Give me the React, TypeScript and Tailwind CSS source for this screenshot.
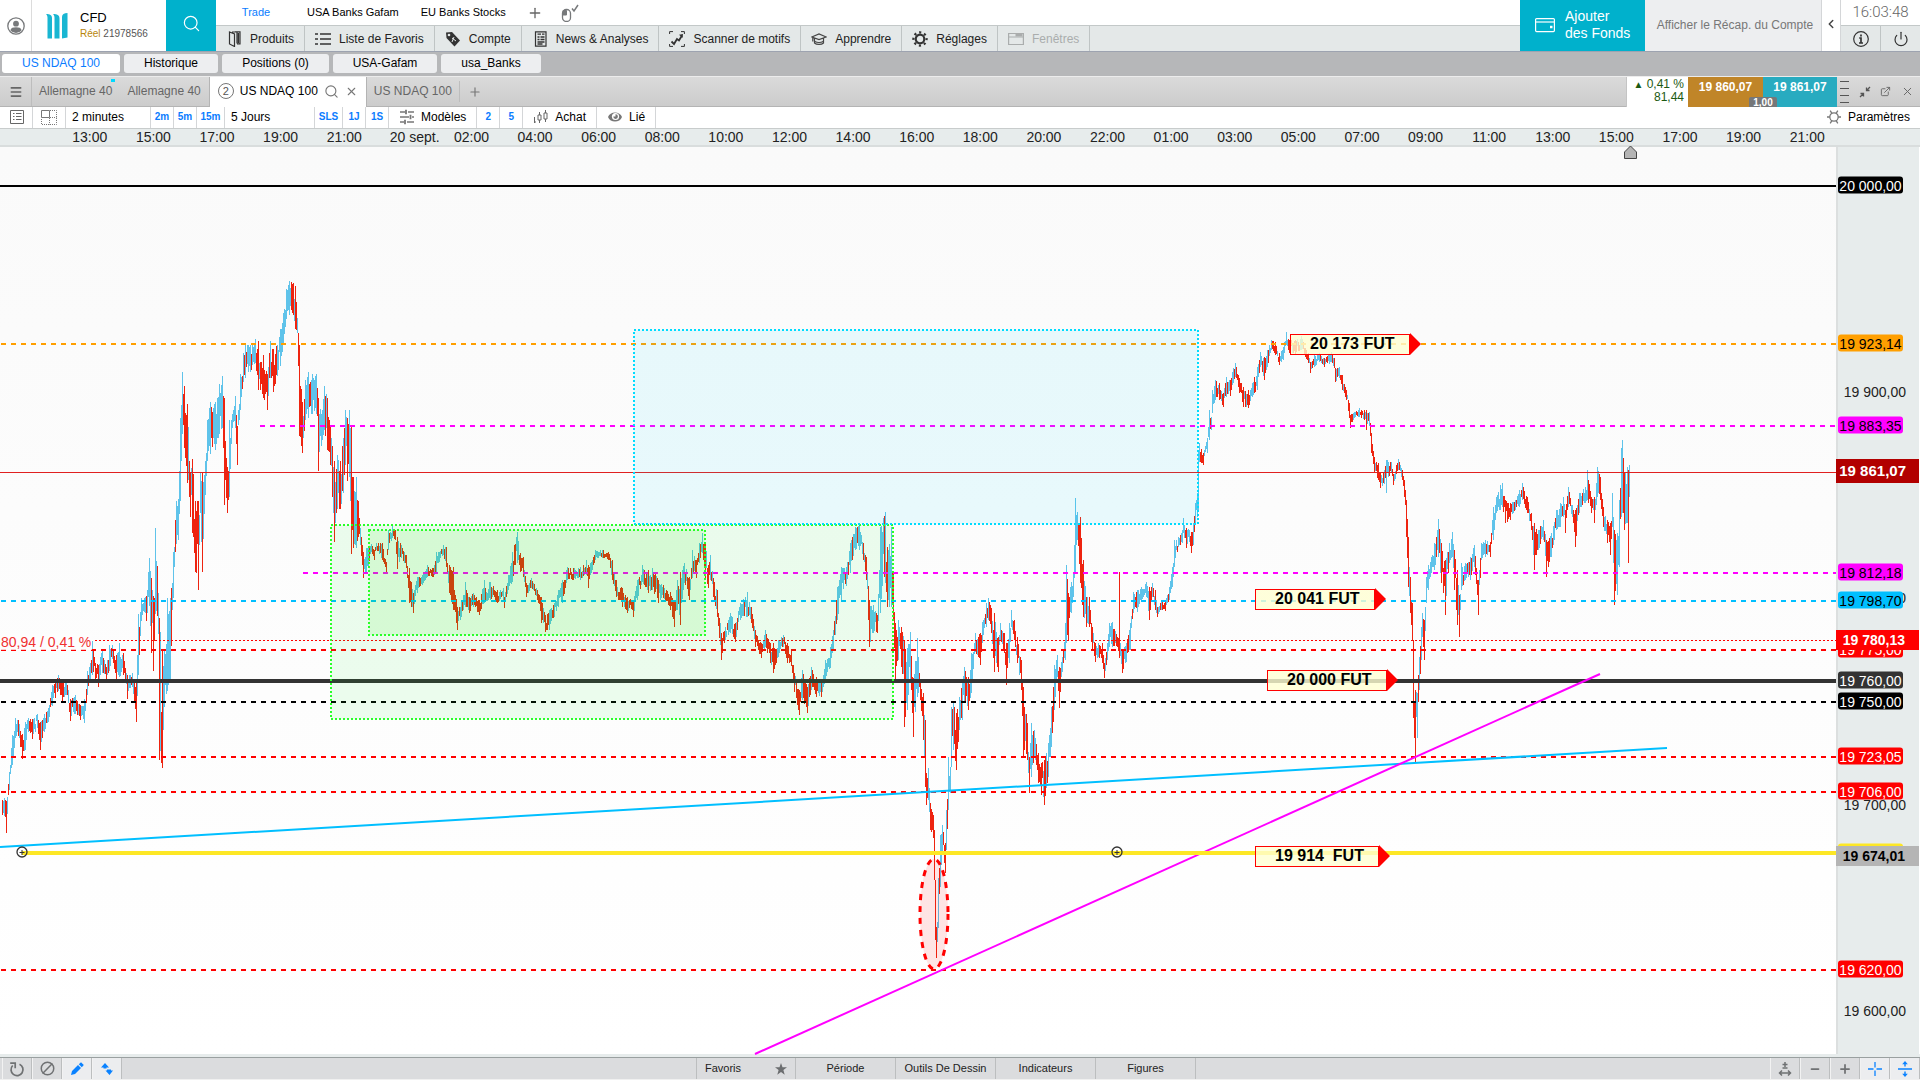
import type { ReactNode } from "react";

import {
    Ban,
    ChevronLeft,
    ExternalLink,
    Menu,
    Minus,
    Plus,
    Power,
    Search,
    X,
} from "lucide-react";

/* ---------------------------------------------------------------- icons */

const UserIcon = () => (
    <svg viewBox="0 0 18 18" className="w-[18px] h-[18px]" fill="none">
        <circle cx="9" cy="9" r="8.2" stroke="#77797b" strokeWidth="1.3" />
        <circle cx="9" cy="6.7" r="2.9" fill="#77797b" />
        <path d="M3.4 13.2c.6-2.4 2.6-3 5.6-3s5 .6 5.6 3A7 7 0 0 1 9 16a7 7 0 0 1-5.6-2.8z" fill="#77797b" />
    </svg>
);

const LogoIcon = () => (
    <svg viewBox="0 0 22 26" className="w-[22px] h-[26px]" fill="#19b6d2">
        <path d="M0 1c4 0 6 1 6 4.500V25.500H1.500V5C1.500 3 1 2 0 1z" />
        <path d="M7 1c4 0 6.500 1 6.500 4.500V25.500H8.500V5C8.500 3 8 2 7 1z" />
        <path d="M21.500 0v24.500L16 25.500V4c0-2.500 2-4 5.500-4z" />
    </svg>
);

const MouseIcon = () => (
    <svg viewBox="0 0 18 18" className="w-[18px] h-[18px]" fill="none" stroke="#77797b">
        <rect x="1.500" y="5.500" width="8" height="12" rx="3.800" strokeWidth="1.300" />
        <path d="M2 6.500h3.500V11H2z" fill="#77797b" />
        <path d="M11 4.500l2 2.500 4-6" strokeWidth="1.500" />
    </svg>
);

const ProductsIcon = () => (
    <svg viewBox="0 0 16 16" className="w-4 h-4" fill="none" stroke="#333" strokeWidth="1.200">
        <path d="M3.500 1l5 2v12.500l-5-2.500zM6 1h5v11.500M9 .8h5v12h-3" />
        <path d="M12.300 2v10" strokeWidth="1.800" />
    </svg>
);

const ListIcon = () => (
    <svg viewBox="0 0 16 16" className="w-4 h-4" stroke="#333" strokeWidth="1.600">
        <path d="M0 3h3M5 3h11M0 8h3M5 8h11M0 13h3M5 13h11" />
    </svg>
);

const TagIcon = () => (
    <svg viewBox="0 0 16 16" className="w-4 h-4">
        <path d="M1 1.500l6-.5 8 8.500-5.500 6L1.500 7z" fill="#333" />
        <circle cx="4" cy="4" r="1.300" fill="#e4e8e8" />
        <path d="M7 7l4 3M9 6l-2 5" stroke="#e4e8e8" strokeWidth="1" />
    </svg>
);

const NewsIcon = () => (
    <svg viewBox="0 0 16 16" className="w-4 h-4" fill="none" stroke="#333">
        <path d="M3.500.8h10.500v14.400H3.500z" strokeWidth="1.200" />
        <path d="M5.500 3.200h3.500M10 3.200h2.500M5.500 6h2M8.500 6h4M5.500 8.500h2M8.500 8.500h4M5.500 11h7M5.500 13h5" strokeWidth="1.300" />
    </svg>
);

const ScannerIcon = () => (
    <svg viewBox="0 0 16 16" className="w-4 h-4" fill="none" stroke="#333">
        <path d="M.6 3V.6H4M12 .6h3.400V3M15.400 13v2.400H12M4 15.400H.6V13" strokeWidth="1" />
        <path d="M2.500 10.500l2.500 2.500 3-5 2 1.500 3-5" strokeWidth="1.800" />
        <path d="M10 3.800l4-.8-.5 4z" fill="#333" stroke="none" />
    </svg>
);

const LearnIcon = () => (
    <svg viewBox="0 0 16 16" className="w-4 h-4" fill="none" stroke="#444" strokeWidth="1.200">
        <path d="M.8 6L8 3l7.200 3L8 8.500zM3.500 7.500v4.500c2 1.800 7 1.800 9 0V7.500M1.800 6.500v4M4 10.500c2 1.300 6 1.300 8 0" />
    </svg>
);

const GearIcon = () => (
    <svg viewBox="0 0 16 16" className="w-4 h-4" fill="none" stroke="#333">
        <circle cx="8" cy="8" r="4.300" strokeWidth="2.200" />
        <circle cx="8" cy="8" r="6.600" strokeWidth="2.200" strokeDasharray="2.200 2.983" strokeDashoffset="1.100" />
    </svg>
);

const WindowIcon = () => (
    <svg viewBox="0 0 16 16" className="w-4 h-4" fill="none" stroke="#aaadad">
        <path d="M.6 2.500h14.800v11H.6zM.6 6h14.800" strokeWidth="1.200" />
        <path d="M7.500 4.200h7" strokeWidth="2.500" />
    </svg>
);

const WalletIcon = () => (
    <svg viewBox="0 0 20 16" className="w-5 h-4" fill="none" stroke="#fff" strokeWidth="1.200">
        <rect x=".6" y="1.600" width="18.800" height="13" rx="1" />
        <path d="M.6 5h18.800" />
        <path d="M15 10h2.500" strokeWidth="2.500" />
    </svg>
);

const InfoIcon = () => (
    <svg viewBox="0 0 16 16" className="w-4 h-4" fill="none" stroke="#333">
        <circle cx="8" cy="8" r="7.300" strokeWidth="1.200" />
        <path d="M8 3.500v2M6.200 7H8v5M6 12h4" strokeWidth="1.700" />
    </svg>
);

const NotesIcon = () => (
    <svg viewBox="0 0 16 16" className="w-4 h-4" fill="none" stroke="#666">
        <path d="M1.500 1.500h13v13h-13z" />
        <path d="M4 4.500h1.500M4 7.500h1.500M4 10.500h1.500M7 4.500h5.500M7 7.500h5.500M7 10.500h5.500" strokeWidth="1.200" />
    </svg>
);

const LayoutIcon = () => (
    <svg viewBox="0 0 16 16" className="w-4 h-4" fill="none" stroke="#777">
        <path d="M.5 1.500h8v7h-8z" />
        <path d="M9 1.500h6.500v14H.5V9M8.500 9v6.500M9 8.500h6.500" strokeDasharray="1 1" />
    </svg>
);

const SlidersIcon = () => (
    <svg viewBox="0 0 16 16" className="w-4 h-4" fill="none" stroke="#777" strokeWidth="1.400">
        <path d="M1 3h5M9 3h6M1 8h9M13 8h2M1 13h4M8 13h7" />
        <path d="M7 .8v4.400M11.500 5.800v4.400M6 10.800v4.400" strokeWidth="1.800" />
    </svg>
);

const CandlesIcon = () => (
    <svg viewBox="0 0 16 16" className="w-4 h-4" fill="none" stroke="#666">
        <path d="M1.500 8v6M1 13h2M6.500 3v3M6.500 11v3M12.500 1v3M12.500 10v3" />
        <path d="M5 6h3v5H5zM11 4h3v6h-3z" />
    </svg>
);

const EyeIcon = () => (
    <svg viewBox="0 0 16 16" className="w-4 h-4">
        <path d="M1 8c2-6 12-6 14 0-2 6-12 6-14 0z" fill="#777" />
        <circle cx="8.500" cy="7.500" r="3.600" fill="#fff" />
        <path d="M8.500 7.500V5.300a2.300 2.300 0 1 1-2.200 2.200z" fill="#777" />
    </svg>
);

const SunIcon = () => (
    <svg viewBox="0 0 16 16" className="w-4 h-4" fill="none" stroke="#777" strokeWidth="1.300">
        <circle cx="8" cy="8" r="4.200" />
        <path d="M12.200 8H15M10.100 11.600l1.700 2.700M5.900 11.600l-1.700 2.700M3.800 8H1M5.900 4.400L4.200 1.700M10.100 4.400l1.700-2.700" />
    </svg>
);

const CollapseIcon = () => (
    <svg viewBox="0 0 12 12" className="w-3 h-3" fill="none" stroke="#555" strokeWidth="1.300">
        <path d="M11 1L7.500 4.500M7.500 1.500v3h3M1 11l3.500-3.500M1.500 7.500h3v3" />
    </svg>
);

const RefreshIcon = () => (
    <svg viewBox="0 0 16 16" className="w-4 h-4" fill="none" stroke="#6f7173" strokeWidth="1.700">
        <path d="M10.500 3.200a6 6 0 1 1-6.800 1.300" />
        <path d="M1.200 2.200h5v5" />
    </svg>
);

const PencilIcon = () => (
    <svg viewBox="0 0 16 16" className="w-4 h-4" fill="#0a82ff">
        <path d="M2 14l1-4 6-6 3 3-6 6zM9.800 3.200L12 1.200l2.800 2.800-2 2.200z" />
    </svg>
);

const SwapIcon = () => (
    <svg viewBox="0 0 16 16" className="w-4 h-4" fill="#0a82ff">
        <path d="M2 6.500L6 2l4 4.500H7.500v1h-3v-1zM6.500 9.500H8v-1h4v1h2L10.500 14z" />
    </svg>
);

const StarIcon = () => (
    <svg viewBox="0 0 12 12" className="w-3 h-3" fill="#6c6e70">
        <path d="M6 0l1.500 4.300H12L8.400 7l1.300 4.700L6 9l-3.700 2.700L3.600 7 0 4.300h4.500z" />
    </svg>
);

const FitIcon = () => (
    <svg viewBox="0 0 16 16" className="w-4 h-4" fill="none" stroke="#6f7173" strokeWidth="1.500">
        <path d="M8 1v5M5.500 3.500h5M5.500 7h5M3 12h10M5 9.500L2.500 12 5 14.500M11 9.500l2.500 2.500-2.500 2.500" />
    </svg>
);

const CrosshairIcon = () => (
    <svg viewBox="0 0 16 16" className="w-4 h-4" fill="none" stroke="#0a82ff" strokeWidth="1.300">
        <path d="M8 1v5.500M8 9.500V15M1 8h5.500M9.500 8H15" />
    </svg>
);

const SplitIcon = () => (
    <svg viewBox="0 0 16 16" className="w-4 h-4" fill="#0a82ff">
        <path d="M1 7.300h14v1.400H1zM8 0l2.800 3.200H8.700V5.500H7.300V3.200H5.200zM8 16l2.800-3.200H8.700v-2.300H7.300v2.300H5.200z" />
    </svg>
);

/* ----------------------------------------------------------- chart data */

const VIEW_TOP = 147;
const VIEW_W = 1836;
const VIEW_H = 907;

// x, high, low
const KNOTS: [number, number, number][] = [
    [2, 800, 815], [4, 798, 816], [6, 801, 833], [9, 772, 790], [12, 735, 765], [13, 736, 758], [15, 718, 738], [18, 720, 736],
    [22, 734, 759], [25, 722, 750], [28, 718, 732], [32, 719, 739], [37, 714, 728], [40, 722, 750], [44, 714, 732], [48, 708, 722],
    [52, 685, 706], [58, 675, 691], [62, 681, 701], [66, 679, 695], [70, 699, 721], [75, 695, 714], [80, 705, 720], [84, 699, 723],
    [87, 671, 695], [90, 663, 679], [92, 641, 675], [95, 663, 679], [98, 665, 687], [102, 649, 673], [106, 667, 681], [109, 645, 671],
    [112, 645, 659], [116, 655, 679], [119, 643, 677], [123, 653, 675], [127, 675, 699], [132, 673, 687], [136, 680, 722], [138, 614, 675],
    [141, 598, 621], [144, 598, 612], [146, 596, 621], [149, 558, 606], [151, 578, 653], [153, 596, 671], [155, 528, 614], [157, 566, 616],
    [159, 618, 760], [162, 649, 768], [164, 649, 707], [167, 598, 691], [170, 598, 679], [173, 552, 598], [176, 501, 544], [178, 499, 540],
    [180, 418, 501], [182, 372, 434], [184, 386, 448], [187, 404, 483], [190, 473, 517], [192, 459, 533], [195, 501, 572], [198, 501, 590],
    [200, 473, 513], [202, 473, 572], [205, 461, 495], [207, 420, 461], [210, 402, 454], [215, 402, 450], [219, 384, 434], [222, 376, 428],
    [224, 398, 505], [227, 467, 513], [229, 420, 497], [232, 414, 428], [235, 396, 428], [237, 426, 465], [240, 374, 410], [243, 353, 382],
    [245, 343, 378], [250, 345, 372], [255, 339, 363], [258, 341, 390], [260, 362, 390], [263, 355, 398], [267, 374, 410], [270, 341, 378],
    [273, 349, 392], [277, 345, 376], [280, 329, 366], [283, 313, 345], [286, 289, 319], [289, 281, 315], [293, 283, 315], [295, 286, 329],
    [298, 333, 366], [299, 345, 436], [302, 402, 453], [305, 380, 420], [308, 372, 418], [312, 374, 414], [316, 374, 414], [318, 398, 471],
    [321, 414, 446], [324, 386, 430], [327, 398, 450], [330, 426, 465], [332, 446, 497], [334, 461, 542], [337, 455, 509], [340, 461, 509],
    [343, 438, 493], [345, 410, 465], [347, 418, 481], [349, 410, 477], [351, 426, 554], [353, 477, 548], [356, 477, 548], [358, 501, 537],
    [361, 537, 556], [363, 552, 578], [366, 548, 572], [368, 547, 567], [371, 544, 552], [374, 550, 560], [376, 543, 550], [382, 543, 560],
    [386, 562, 572], [388, 530, 550], [392, 526, 538], [395, 530, 540], [397, 537, 569], [401, 545, 558], [406, 555, 568], [409, 568, 603],
    [413, 593, 613], [417, 577, 593], [422, 575, 585], [427, 565, 577], [433, 568, 577], [436, 552, 572], [439, 552, 562], [443, 545, 555],
    [446, 547, 567], [449, 565, 593], [453, 567, 610], [457, 607, 630], [461, 600, 617], [465, 582, 607], [469, 597, 613], [473, 593, 607],
    [479, 600, 615], [484, 580, 603], [490, 582, 600], [497, 590, 603], [503, 588, 600], [504, 597, 608], [508, 575, 590], [512, 552, 582],
    [517, 532, 563], [520, 553, 572], [523, 557, 577], [526, 583, 597], [531, 578, 588], [537, 590, 600], [541, 597, 623], [545, 615, 632],
    [549, 610, 630], [554, 603, 617], [558, 590, 607], [562, 580, 603], [567, 567, 580], [573, 568, 580], [580, 567, 580], [586, 560, 575],
    [588, 565, 588], [592, 560, 570], [595, 550, 560], [602, 550, 558], [608, 552, 560], [612, 560, 580], [616, 580, 597], [622, 588, 607],
    [627, 597, 613], [633, 600, 617], [637, 580, 600], [642, 565, 582], [648, 570, 593], [652, 568, 590], [658, 580, 603], [663, 585, 598],
    [670, 592, 610], [674, 600, 627], [677, 580, 610], [680, 572, 625], [684, 563, 583], [689, 577, 600], [692, 550, 578], [696, 560, 578],
    [699, 543, 563], [702, 533, 553], [705, 543, 578], [708, 565, 588], [710, 555, 580], [713, 578, 597], [717, 590, 617], [721, 633, 660],
    [725, 627, 640], [730, 613, 633], [735, 623, 642], [740, 603, 620], [747, 592, 617], [751, 607, 623], [755, 630, 647], [761, 643, 658],
    [765, 630, 647], [770, 643, 663], [773, 643, 673], [778, 640, 657], [783, 635, 647], [787, 643, 663], [791, 650, 666], [794, 673, 692],
    [799, 690, 715], [802, 670, 700], [807, 687, 713], [811, 667, 690], [816, 677, 697], [821, 680, 697], [825, 660, 680], [830, 647, 668],
    [833, 630, 650], [837, 587, 620], [841, 567, 600], [846, 567, 586], [850, 543, 573], [855, 527, 550], [859, 525, 550], [863, 543, 560],
    [866, 557, 580], [869, 600, 647], [873, 605, 633], [877, 615, 633], [880, 527, 613], [885, 512, 583], [887, 547, 607], [891, 527, 607],
    [893, 573, 620], [895, 623, 683], [898, 620, 660], [901, 627, 667], [904, 640, 727], [907, 648, 710], [910, 632, 680], [913, 678, 737],
    [917, 638, 697], [920, 680, 700], [923, 693, 740], [925, 720, 787], [926, 773, 805], [928, 768, 800], [930, 803, 830], [933, 815, 838],
    [934, 830, 880], [935, 880, 940], [936, 927, 958], [938, 878, 928], [940, 835, 887], [942, 825, 853], [945, 843, 873], [946, 810, 850],
    [948, 757, 810], [950, 767, 793], [951, 707, 767], [953, 703, 750], [956, 713, 770], [959, 697, 730], [962, 680, 720], [964, 667, 703],
    [968, 677, 710], [971, 653, 693], [975, 633, 652], [980, 633, 665], [982, 622, 643], [986, 603, 627], [988, 598, 620], [991, 608, 633],
    [994, 613, 672], [998, 637, 672], [1000, 623, 640], [1004, 633, 653], [1006, 643, 685], [1009, 623, 663], [1011, 610, 627], [1014, 620, 640],
    [1017, 637, 663], [1021, 660, 690], [1023, 687, 758], [1027, 723, 760], [1029, 757, 793], [1031, 723, 777], [1034, 730, 757], [1038, 753, 783],
    [1041, 763, 795], [1044, 760, 805], [1048, 743, 777], [1051, 707, 747], [1054, 665, 710], [1057, 655, 677], [1059, 667, 708], [1062, 657, 672],
    [1065, 623, 660], [1066, 565, 643], [1068, 593, 640], [1071, 582, 613], [1073, 573, 597], [1075, 498, 573], [1077, 512, 540], [1080, 517, 583],
    [1083, 560, 617], [1086, 597, 627], [1089, 597, 627], [1092, 627, 650], [1095, 643, 662], [1098, 643, 657], [1102, 643, 663], [1104, 663, 678],
    [1107, 643, 660], [1109, 623, 647], [1112, 622, 647], [1117, 637, 647], [1119, 636, 658], [1122, 650, 673], [1126, 643, 662], [1130, 623, 650],
    [1133, 592, 613], [1137, 590, 612], [1141, 587, 600], [1146, 582, 597], [1149, 587, 620], [1152, 583, 597], [1155, 590, 610], [1157, 607, 617],
    [1161, 600, 610], [1165, 602, 611], [1169, 587, 600], [1172, 567, 587], [1174, 540, 567], [1178, 537, 547], [1182, 530, 543], [1183, 518, 533],
    [1186, 528, 548], [1189, 530, 542], [1191, 532, 553], [1193, 523, 545], [1195, 503, 523], [1197, 493, 517], [1198, 450, 510], [1199, 443, 462],
    [1203, 453, 465], [1207, 438, 453], [1209, 410, 440], [1211, 417, 430], [1212, 390, 413], [1215, 380, 400], [1219, 383, 400], [1223, 393, 407],
    [1226, 377, 397], [1230, 380, 396], [1233, 368, 383], [1235, 363, 377], [1239, 378, 393], [1243, 387, 407], [1248, 390, 408], [1252, 383, 397],
    [1257, 367, 390], [1260, 352, 367], [1264, 357, 380], [1267, 350, 367], [1271, 340, 350], [1275, 342, 355], [1279, 353, 365], [1283, 347, 360],
    [1286, 332, 345], [1289, 340, 353], [1295, 340, 354], [1301, 336, 350], [1305, 348, 357], [1308, 353, 363], [1310, 362, 373], [1314, 355, 367],
    [1319, 353, 362], [1324, 358, 367], [1329, 354, 364], [1331, 352, 362], [1334, 358, 368], [1335, 368, 382], [1339, 367, 378], [1342, 375, 390],
    [1346, 390, 400], [1349, 403, 418], [1350, 415, 428], [1354, 412, 418], [1359, 408, 417], [1364, 410, 420], [1366, 410, 430], [1369, 412, 426],
    [1371, 433, 453], [1374, 457, 473], [1378, 463, 480], [1380, 473, 488], [1384, 470, 484], [1386, 460, 493], [1391, 462, 473], [1393, 474, 485],
    [1398, 459, 470], [1402, 470, 480], [1404, 480, 497], [1406, 500, 537], [1408, 537, 587], [1410, 577, 613], [1412, 603, 640], [1413, 640, 718],
    [1415, 690, 762], [1417, 693, 738], [1419, 657, 690], [1421, 627, 660], [1422, 613, 637], [1424, 620, 660], [1426, 577, 603], [1428, 565, 590],
    [1431, 557, 573], [1434, 543, 570], [1438, 519, 557], [1441, 543, 583], [1445, 560, 615], [1449, 543, 563], [1452, 532, 557], [1454, 550, 590],
    [1457, 570, 625], [1459, 595, 637], [1461, 563, 590], [1465, 563, 580], [1470, 557, 580], [1474, 545, 567], [1478, 580, 615], [1481, 543, 560],
    [1485, 540, 557], [1490, 542, 557], [1493, 507, 540], [1496, 497, 513], [1500, 485, 510], [1502, 483, 507], [1505, 500, 523], [1510, 503, 520],
    [1515, 500, 510], [1519, 490, 507], [1522, 483, 500], [1527, 497, 513], [1531, 513, 530], [1534, 523, 570], [1538, 530, 550], [1543, 520, 540],
    [1546, 540, 577], [1551, 533, 557], [1556, 510, 530], [1560, 503, 527], [1563, 497, 517], [1565, 510, 533], [1568, 487, 507], [1573, 510, 523],
    [1575, 510, 547], [1579, 493, 513], [1585, 487, 503], [1587, 470, 500], [1591, 497, 513], [1594, 497, 523], [1597, 467, 497], [1600, 477, 500],
    [1603, 507, 527], [1607, 520, 543], [1610, 523, 555], [1612, 493, 527], [1614, 530, 605], [1617, 533, 595], [1619, 500, 567], [1621, 448, 517],
    [1622, 440, 513], [1624, 473, 530], [1627, 467, 523], [1628, 470, 563], [1629, 465, 497],
];

const noise = (n: number) => {
    const v = Math.sin(n * 127.1) * 43758.5453;
    return v - Math.floor(v);
};

function buildBars() {
    let up = "";
    let down = "M1119.5 572V640";
    const push = (x: number, high: number, low: number, falling: boolean) => {
        const seg = `M${x + 0.5} ${Math.round(high)}V${Math.round(low)}`;
        if (falling) down += seg;
        else up += seg;
    };

    KNOTS.forEach(([x, high, low], i) => {
        const next = KNOTS[i + 1];
        const prev = KNOTS[i - 1] ?? KNOTS[i];
        const falling = high + low === prev[1] + prev[2] ? noise(x) > 0.5 : high + low > prev[1] + prev[2];
        push(x, high, low, falling);
        if (!next) return;

        // bars between two knots keep inside the interpolated range
        for (let bx = x + 1; bx < next[0]; bx++) {
            const t = (bx - x) / (next[0] - x);
            const top = high + (next[1] - high) * t;
            const bottom = low + (next[2] - low) * t;
            const size = (bottom - top) * (0.4 + noise(bx) * 0.5);
            const start = top + (bottom - top - size) * noise(bx + 0.37);
            const trend = next[1] + next[2] > high + low ? 0.3 : 0.7;
            push(bx, start, start + size, noise(bx + 0.71) > trend);
        }
    });

    return { up, down };
}

const BARS = buildBars();

const DASHED_LINES = [
    { y: 344, from: 1, color: "#ff9f00" },
    { y: 426, from: 260, color: "#ff00ff" },
    { y: 573, from: 303, color: "#ff00ff" },
    { y: 601, from: 1, color: "#00bfff" },
    { y: 650, from: 1, color: "#ff0000" },
    { y: 702, from: 1, color: "#000000" },
    { y: 757, from: 1, color: "#ff0000" },
    { y: 792, from: 1, color: "#ff0000" },
    { y: 970, from: 1, color: "#ff0000" },
];

const TAGS = [
    { x: 1290, y: 344, text: "20 173 FUT" },
    { x: 1255, y: 599, text: "20 041 FUT" },
    { x: 1267, y: 680, text: "20 000 FUT" },
    { x: 1255, y: 856, text: "19 914  FUT" },
];

const SCALE = [
    { y: 392, text: "19 900,00" },
    { y: 598, text: "19 800,00" },
    { y: 805, text: "19 700,00" },
    { y: 1011, text: "19 600,00" },
];

const CHIPS = [
    { y: 185, text: "20 000,00", style: "bg-black text-white" },
    { y: 343, text: "19 923,14", style: "bg-[#ff9f00] text-black" },
    { y: 425, text: "19 883,35", style: "bg-[#ff00ff] text-black" },
    { y: 572, text: "19 812,18", style: "bg-[#ff00ff] text-black" },
    { y: 600, text: "19 798,70", style: "bg-[#00bfff] text-black" },
    { y: 649, text: "19 775,00", style: "bg-[#ff0000] text-white" },
    { y: 680, text: "19 760,00", style: "bg-[#333333] text-white" },
    { y: 701, text: "19 750,00", style: "bg-black text-white" },
    { y: 756, text: "19 723,05", style: "bg-[#ff0000] text-white" },
    { y: 791, text: "19 706,00", style: "bg-[#ff0000] text-white" },
    { y: 852, text: "", style: "bg-[#fde725]" },
    { y: 969, text: "19 620,00", style: "bg-[#ff0000] text-white" },
];

const MARKS = [
    { y: 471, text: "19 861,07", style: "h-6 pr-[13px] bg-[#b20000] text-white text-[15px]" },
    { y: 640, text: "19 780,13", style: "h-5 pr-3.5 bg-[#ff0000] text-white text-sm" },
    { y: 856, text: "19 674,01", style: "h-5 pr-3.5 bg-[#b5b5b5] text-black text-sm" },
];

const TIMES = [
    "13:00", "15:00", "17:00", "19:00", "21:00", "20 sept.", "02:00", "04:00", "06:00", "08:00",
    "10:00", "12:00", "14:00", "16:00", "18:00", "20:00", "22:00", "01:00", "03:00", "05:00",
    "07:00", "09:00", "11:00", "13:00", "15:00", "17:00", "19:00", "21:00",
];

const topOf = (y: number) => `${((y - VIEW_TOP) / VIEW_H) * 100}%`;
const leftOf = (x: number) => `${(x / VIEW_W) * 100}%`;

/* --------------------------------------------------------------- header */

const MENU = [
    { label: "Produits", icon: <ProductsIcon /> },
    { label: "Liste de Favoris", icon: <ListIcon /> },
    { label: "Compte", icon: <TagIcon /> },
    { label: "News & Analyses", icon: <NewsIcon /> },
    { label: "Scanner de motifs", icon: <ScannerIcon /> },
    { label: "Apprendre", icon: <LearnIcon /> },
    { label: "Réglages", icon: <GearIcon /> },
    { label: "Fenêtres", icon: <WindowIcon />, disabled: true },
];

const Header = () => (
    <header className="flex h-[52px] shrink-0 border-b border-[#9da3b0] bg-white">
        <button type="button" aria-label="Profil" className="w-8 flex items-center justify-center border-r border-[#dcdcdc]">
            <UserIcon />
        </button>
        <div className="w-[134px] flex items-center gap-3 pl-3.5">
            <LogoIcon />
            <div className="leading-4 whitespace-nowrap">
                <p className="text-[13px] text-black">CFD</p>
                <p className="text-[10px] text-[#555]"><span className="text-[#b8860b]">Réel</span> 21978566</p>
            </div>
        </div>
        <button type="button" aria-label="Rechercher" className="w-[50px] pb-1 flex items-center justify-center bg-[#00b1cc] text-white">
            <Search className="w-[19px] h-[19px]" strokeWidth={1.5} />
        </button>

        <div className="flex-1 min-w-0 flex flex-col">
            <nav className="flex h-[26px] border-b border-[#c3c8c8] text-[11px] text-black">
                <button type="button" className="w-20 text-[#0a7cff]">Trade</button>
                <button type="button" className="px-[11px]">USA Banks Gafam</button>
                <button type="button" className="px-[11px]">EU Banks Stocks</button>
                <button type="button" aria-label="Ajouter" className="w-9 flex items-center justify-center text-[#666]">
                    <Plus className="w-4 h-4" strokeWidth={2} />
                </button>
                <button type="button" aria-label="Mode souris" className="pl-2">
                    <MouseIcon />
                </button>
            </nav>
            <nav className="flex flex-1 bg-[#e4e8e8] text-xs text-[#222]">
                {MENU.map((item) => (
                    <button
                        key={item.label}
                        type="button"
                        disabled={item.disabled}
                        className="flex items-center gap-2 px-2.5 border-r border-[#bfc4c4] whitespace-nowrap disabled:text-[#aaadad]"
                    >
                        {item.icon}
                        {item.label}
                    </button>
                ))}
            </nav>
        </div>

        <button type="button" className="w-[125px] flex items-center gap-2.5 pl-[15px] pb-0.5 bg-[#00b1cc] text-white text-sm leading-[17px] text-left">
            <WalletIcon />
            <span>Ajouter<br />des Fonds</span>
        </button>
        <button type="button" className="w-[176px] pl-1 pb-0.5 bg-[#edeef0] text-xs text-[#777] whitespace-nowrap">
            Afficher le Récap. du Compte
        </button>
        <button type="button" aria-label="Réduire" className="w-5 pb-1 flex items-center justify-center border-x border-[#d4d6d8] text-[#444]">
            <ChevronLeft className="w-3.5 h-3.5" strokeWidth={2.5} />
        </button>
        <div className="w-[79px] flex flex-col">
            <time className="flex h-[26px] items-center justify-center border-b border-[#c3c8c8] font-[Roboto] font-light text-[15px] text-[#666]">16:03:48</time>
            <div className="flex flex-1 bg-[#e4e8e8] text-[#333]">
                <button type="button" aria-label="Informations" className="flex-1 flex items-center justify-center border-r border-[#bfc4c4]">
                    <InfoIcon />
                </button>
                <button type="button" aria-label="Déconnexion" className="flex-1 flex items-center justify-center">
                    <Power className="w-4 h-4" strokeWidth={1.8} />
                </button>
            </div>
        </div>
    </header>
);

const WorkspaceBar = () => (
    <nav className="flex h-6 shrink-0 items-center gap-1 pl-0.5 pb-px bg-[#b6b7b9] text-xs text-black [&>button]:h-[19px] [&>button]:pb-0.5 [&>button]:rounded-[3px]">
        <button type="button" className="w-[118px] bg-white text-[#0a7cff]">US NDAQ 100</button>
        <button type="button" className="w-[94px] bg-[#edeef0]">Historique</button>
        <button type="button" className="w-[107px] bg-[#edeef0]">Positions (0)</button>
        <button type="button" className="w-[104px] bg-[#edeef0]">USA-Gafam</button>
        <button type="button" className="w-[100px] bg-[#edeef0]">usa_Banks</button>
    </nav>
);

/* ----------------------------------------------------------- chart panel */

const TabBar = () => (
    <div className="flex h-[31px] shrink-0 border-t border-t-[#ececec] border-b border-b-[#b4b4b4] bg-linear-to-b from-[#dadada] to-[#cccccc] text-xs text-[#666]">
        <button type="button" aria-label="Menu" className="w-[31px] flex items-center justify-center">
            <Menu className="w-3.5 h-3.5" strokeWidth={2.8} />
        </button>
        <button type="button" className="relative px-[7px] pb-0.5 border-l border-[#bdbdbd]">
            Allemagne 40
            <span className="absolute right-1 top-0.5 w-1 h-[3px] bg-[#00d9ff]" />
        </button>
        <button type="button" className="px-2 pb-0.5">Allemagne 40</button>
        <div className="flex items-center -mb-px px-2 pb-0.5 border-x border-[#b4b4b4] bg-white text-black">
            <span className="w-4 h-4 mr-1.5 flex items-center justify-center rounded-full border border-[#777] text-[11px] text-[#555]">2</span>
            US NDAQ 100
            <button type="button" aria-label="Rechercher" className="ml-1.5 text-[#777]">
                <Search className="w-[15px] h-[15px]" strokeWidth={1.8} />
            </button>
            <button type="button" aria-label="Fermer" className="ml-1.5 text-[#777]">
                <X className="w-[13px] h-[13px]" strokeWidth={2} />
            </button>
        </div>
        <button type="button" className="px-[7px] pb-0.5">US NDAQ 100</button>
        <button type="button" aria-label="Nouvel onglet" className="w-8 my-1 pl-2 border-l border-[#bdbdbd] text-[#777]">
            <Plus className="w-3.5 h-3.5" strokeWidth={2} />
        </button>

        <div className="ml-auto flex -mb-px">
            <div className="w-[62px] pr-1 pt-px border-l border-[#c4c4c4] bg-white text-right leading-[13px] text-[#1c5a12]">
                <p><span className="text-[10px]">▲</span> 0,41 %</p>
                <p>81,44</p>
            </div>
            <div className="relative flex text-white font-bold">
                <button type="button" className="w-[75px] pb-2.5 bg-[#c08528]">19 860,07</button>
                <button type="button" className="w-[74px] pb-2.5 bg-[#28abc0]">19 861,07</button>
                <span className="absolute bottom-0 left-[61px] w-7 h-2.5 rounded-t-[2px] bg-[#757779] text-center text-[10px] leading-[11px]">1,00</span>
            </div>
            <div className="flex items-center justify-between w-[83px] pl-[3px] pr-1.5 border-b border-[#b4b4b4]">
                <div className="flex flex-col gap-1.5 w-[9px]">
                    <span className="h-px bg-[#555]" />
                    <span className="h-px bg-[#555]" />
                    <span className="h-px bg-[#555]" />
                    <span className="h-px bg-[#555]" />
                </div>
                <button type="button" aria-label="Réduire"><CollapseIcon /></button>
                <button type="button" aria-label="Détacher"><ExternalLink className="w-[11px] h-[11px]" /></button>
                <button type="button" aria-label="Fermer"><X className="w-[13px] h-[13px]" strokeWidth={1.8} /></button>
            </div>
        </div>
    </div>
);

const Shortcut = ({ children }: { children: ReactNode }) => (
    <button type="button" className="w-[23px] border-r border-[#d4d6d8] text-[10px] font-bold text-[#0a7cff]">
        {children}
    </button>
);

const Toolbar = () => (
    <div className="flex h-[22px] shrink-0 border-b border-[#c8cccc] bg-white text-xs text-black [&>*]:pb-0.5">
        <button type="button" aria-label="Liste" className="w-[33px] pl-[9px] border-r border-[#d4d6d8]"><NotesIcon /></button>
        <button type="button" aria-label="Disposition" className="w-[33px] pl-2 border-r border-[#d4d6d8]"><LayoutIcon /></button>
        <select aria-label="Intervalle" className="appearance-none w-[85px] pl-1.5 border-r border-[#d4d6d8]">
            <option>2 minutes</option>
        </select>
        <Shortcut>2m</Shortcut>
        <Shortcut>5m</Shortcut>
        <button type="button" className="w-7 border-r border-[#d4d6d8] text-[10px] font-bold text-[#0a7cff]">15m</button>
        <select aria-label="Période" className="appearance-none w-[90px] pl-1.5 border-r border-[#d4d6d8]">
            <option>5 Jours</option>
        </select>
        <button type="button" className="w-[28px] border-r border-[#d4d6d8] text-[10px] font-bold text-[#0a7cff]">SLS</button>
        <Shortcut>1J</Shortcut>
        <Shortcut>1S</Shortcut>
        <button type="button" className="flex items-center gap-1.5 px-2.5 border-r border-[#d4d6d8]"><SlidersIcon />Modèles</button>
        <Shortcut>2</Shortcut>
        <Shortcut>5</Shortcut>
        <button type="button" className="flex items-center gap-1.5 px-2.5 border-r border-[#d4d6d8]"><CandlesIcon />Achat</button>
        <button type="button" className="flex items-center gap-1.5 px-2.5 border-r border-[#d4d6d8]"><EyeIcon />Lié</button>
        <button type="button" className="ml-auto flex items-center gap-1.5 pr-2.5"><SunIcon />Paramètres</button>
    </div>
);

const TimeAxis = () => (
    <div className="grid grid-cols-[repeat(28,minmax(0,1fr))] h-[18px] shrink-0 pl-[58px] pr-[81px] border-b-2 border-[#d9dddd] bg-[#e7ecec] text-sm leading-4 text-[#222]">
        {TIMES.map((time, i) => (
            <span key={i} className={time.length > 5 ? "text-right whitespace-nowrap" : "text-center"}>
                {time}
            </span>
        ))}
    </div>
);

const Plot = () => (
    <div className="relative flex-1 min-w-0 border-r-2 border-[#dcdfdf] bg-linear-to-b from-[#fafafa] to-white">
        <svg
            viewBox={`0 ${VIEW_TOP} ${VIEW_W} ${VIEW_H}`}
            preserveAspectRatio="none"
            className="absolute inset-0 w-full h-full overflow-visible"
            fill="none"
        >
            <path d={BARS.up} stroke="#5fc3ea" />
            <path d={BARS.down} stroke="#ee2410" />

            <path d="M0 186H1836" stroke="#000" strokeWidth="2" />
            {DASHED_LINES.map((line) => (
                <path key={line.y} d={`M${line.from} ${line.y}H1836`} stroke={line.color} strokeWidth="2" strokeDasharray="5 5" />
            ))}
            <path d="M0 472.500H1836" stroke="#e02020" />
            <path d="M95 640.500H1836" stroke="#f00" strokeDasharray="2 2" />
            <path d="M0 681H1836" stroke="#333" strokeWidth="4" />

            <rect x="331" y="525" width="562" height="194" fill="#00f018" fillOpacity=".07" stroke="#28ff28" strokeWidth="2" strokeDasharray="2 2" />
            <rect x="369" y="530" width="336" height="105" fill="#20f000" fillOpacity=".1" stroke="#28ff28" strokeWidth="2" strokeDasharray="2 2" />
            <rect x="634" y="330" width="564" height="194" fill="#00d9ff" fillOpacity=".08" stroke="#00dcff" strokeWidth="2" strokeDasharray="2 2" />
            <ellipse cx="934" cy="914" rx="14" ry="55" fill="#f00" fillOpacity=".1" stroke="#f00" strokeWidth="3" strokeDasharray="6 6" />

            <path d="M0 847L1667 748" stroke="#00bfff" strokeWidth="2" />
            <path d="M755 1054L1600 674" stroke="#f0f" strokeWidth="2" />
            <path d="M22 853H1836" stroke="#fde725" strokeWidth="4" />
            {[22, 1117].map((x) => (
                <g key={x} stroke="#333">
                    <circle cx={x} cy="852" r="5" strokeWidth="1.300" />
                    <path d={`M${x - 2.5} 852.500h5M${x} 850v5`} />
                </g>
            ))}
            <path d="M1624.500 158.500V152l6-6 6 6v6.500z" fill="#b4b4b4" stroke="#444" />
        </svg>

        <span className="absolute left-0 px-px -translate-y-1/2 bg-[#fcfcfc]/80 text-sm leading-4 text-[#f03030]" style={{ top: topOf(642) }}>
            80,94 / 0,41 %
        </span>

        {TAGS.map((tag) => (
            <div
                key={tag.y}
                className="absolute flex items-center -translate-y-1/2"
                style={{ left: leftOf(tag.x), top: topOf(tag.y) }}
            >
                <span className="h-[21px] min-w-[120px] pl-[19px] pr-3.5 border border-[#f00] bg-[#ffffd2]/80 text-base leading-[17px] font-bold text-black whitespace-pre">
                    {tag.text}
                </span>
                <svg viewBox="0 0 11 22" className="w-[11px] h-[22px]" fill="#f00">
                    <path d="M0 0l11 11L0 22z" />
                </svg>
            </div>
        ))}
    </div>
);

const PriceAxis = () => (
    <div className="relative w-[82px] shrink-0 border-r border-white bg-[#e7ecec] text-sm">
        {SCALE.map((label) => (
            <span key={label.y} className="absolute right-[13px] -translate-y-1/2 leading-4 text-[#222]" style={{ top: topOf(label.y) }}>
                {label.text}
            </span>
        ))}
        {CHIPS.map((chip) => (
            <span
                key={chip.y}
                className={`absolute left-0 w-[65px] h-[17px] -translate-y-1/2 rounded-[3px] leading-[18px] text-center whitespace-nowrap ${chip.style}`}
                style={{ top: topOf(chip.y) }}
            >
                {chip.text}
            </span>
        ))}
        {MARKS.map((mark) => (
            <span
                key={mark.y}
                className={`absolute -left-0.5 right-0 flex items-center justify-end -translate-y-1/2 font-bold whitespace-nowrap ${mark.style}`}
                style={{ top: topOf(mark.y) }}
            >
                {mark.text}
            </span>
        ))}
    </div>
);

/* --------------------------------------------------------------- footer */

const Tool = ({ label, active, children }: { label: string; active?: boolean; children: ReactNode }) => (
    <button
        type="button"
        aria-label={label}
        className={`w-[30px] flex items-center justify-center border-l border-l-[#f2f2f2] border-r border-r-[#bcbebf] text-[#6f7173] ${active ? "bg-[#ecedef]" : "bg-[#dbdcde]"}`}
    >
        {children}
    </button>
);

const Footer = () => (
    <footer className="flex h-[26px] shrink-0 flex-col bg-[#e7ecec] pt-[3px]">
        <div className="flex flex-1 pl-0.5 border-t border-t-[#9aa0a0] border-b border-b-[#f0f0f0] bg-[#dbdcde] text-[11px] text-[#222]">
            <Tool label="Actualiser"><RefreshIcon /></Tool>
            <Tool label="Effacer"><Ban className="w-[15px] h-[15px] -scale-x-100" strokeWidth={2.4} /></Tool>
            <Tool label="Dessiner" active><PencilIcon /></Tool>
            <Tool label="Inverser" active><SwapIcon /></Tool>
            <div className="flex flex-1 justify-center [&>button]:w-[100px] [&>button]:border-r [&>button]:border-[#bcbebf]">
                <button type="button" className="flex items-center justify-between pl-2 pr-2 border-l">
                    Favoris
                    <StarIcon />
                </button>
                <button type="button">Période</button>
                <button type="button">Outils De Dessin</button>
                <button type="button">Indicateurs</button>
                <button type="button">Figures</button>
            </div>
            <Tool label="Ajuster"><FitIcon /></Tool>
            <Tool label="Zoom arrière"><Minus className="w-3 h-3" strokeWidth={3.5} /></Tool>
            <Tool label="Zoom avant"><Plus className="w-3.5 h-3.5" strokeWidth={3} /></Tool>
            <Tool label="Réticule" active><CrosshairIcon /></Tool>
            <Tool label="Séparer" active><SplitIcon /></Tool>
        </div>
    </footer>
);

export default function App() {
    return (
        <div className="flex h-screen flex-col overflow-hidden bg-white font-['Liberation_Sans',Arial,sans-serif]">
            <Header />
            <WorkspaceBar />
            <TabBar />
            <Toolbar />
            <TimeAxis />
            <main className="flex flex-1 min-h-0">
                <Plot />
                <PriceAxis />
            </main>
            <Footer />
        </div>
    );
}
